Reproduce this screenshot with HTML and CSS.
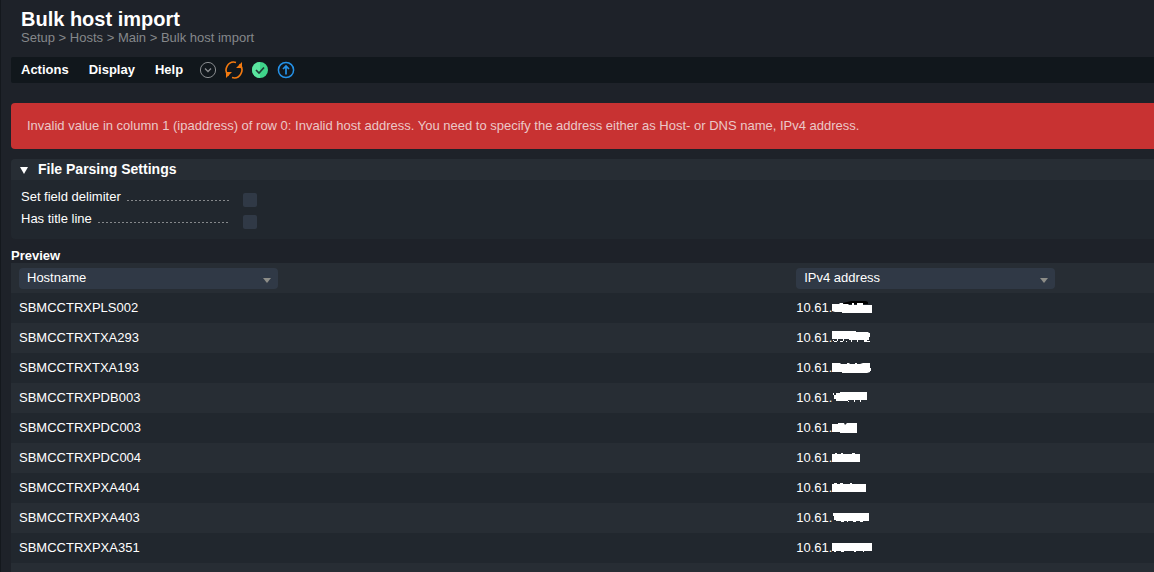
FILE: index.html
```html
<!DOCTYPE html>
<html lang="en">
<head>
    <meta charset="UTF-8">
    <meta name="viewport" content="width=device-width, initial-scale=1.0">
    <title>Bulk host import</title>
    <link rel="stylesheet" href="styles.css">
</head>
<body>
    <div class="page">
        <header class="page-header">
            <h1>Bulk host import</h1>
            <nav class="breadcrumb">
                <a href="#">Setup</a> &gt; <a href="#">Hosts</a> &gt; <a href="#">Main</a> &gt; <a href="#">Bulk host import</a>
            </nav>
        </header>

        <!-- Menu bar -->
        <div class="menu-bar">
            <div class="menus">
                <button class="menu" type="button">Actions</button>
                <button class="menu" type="button">Display</button>
                <button class="menu" type="button">Help</button>
            </div>
            <div class="shortcuts">
                <button class="icon-button" type="button" aria-label="More">
                    <svg viewBox="0 0 18 18" fill="none" stroke="#8a8d90">
                        <circle cx="9" cy="9" r="7.6"/>
                        <path d="M6 7.5l3 3 3-3" stroke-width="1.3"/>
                    </svg>
                </button>
                <button class="icon-button" type="button" aria-label="Reload">
                    <svg viewBox="0 0 18 18" fill="none" stroke="#f37a10" stroke-width="1.6">
                        <path d="M11 1.4A7.8 7.8 0 0 0 3.600 14.600M7 16.600A7.800 7.800 0 0 0 14.400 3.400"/>
                        <path d="M17 1v6h-6zM1 17v-6h6z" fill="#f37a10" stroke="none"/>
                    </svg>
                </button>
                <button class="icon-button" type="button" aria-label="Accept">
                    <svg viewBox="0 0 18 18">
                        <circle cx="9" cy="9" r="8" fill="#3fd48a"/>
                        <path d="M9 1a8 8 0 0 0 0 16z" fill="#5ae59f"/>
                        <path d="M5 9l3 3 5-5.500" fill="none" stroke="#1e3a34" stroke-width="1.7"/>
                    </svg>
                </button>
                <button class="icon-button" type="button" aria-label="Upload">
                    <svg viewBox="0 0 18 18" fill="none" stroke="#2592e8" stroke-width="1.5">
                        <circle cx="9" cy="9" r="7.6"/>
                        <path d="M9 13.500V5M6 8l3-3 3 3" stroke-width="1.7"/>
                    </svg>
                </button>
            </div>
        </div>

        <div class="error" role="alert">Invalid value in column 1 (ipaddress) of row 0: Invalid host address. You need to specify the address either as Host- or DNS name, IPv4 address.</div>

        <!-- Parsing settings -->
        <section class="settings">
            <h2 class="settings-title">
                <svg class="fold-icon" viewBox="0 0 8 7"><path d="M0 0h8L4 7z" fill="#fff"/></svg>
                File Parsing Settings
            </h2>
            <div class="settings-body">
                <div class="setting">
                    <label for="delimiter">Set field delimiter</label>
                    <input type="checkbox" id="delimiter">
                </div>
                <div class="setting">
                    <label for="title-line">Has title line</label>
                    <input type="checkbox" id="title-line">
                </div>
            </div>
        </section>

        <!-- Preview table -->
        <h3 class="preview-title">Preview</h3>
        <table class="preview">
            <thead>
                <tr>
                    <th class="host-column">
                        <select aria-label="Column 1"><option>Hostname</option></select>
                    </th>
                    <th>
                        <select aria-label="Column 2"><option>IPv4 address</option></select>
                    </th>
                </tr>
            </thead>
            <tbody>
                <tr>
                    <td>SBMCCTRXPLS002</td>
                    <td>10.61.<svg class="mask" viewBox="0 0 42 16"><path d="M11 3l8-2h15l2 1v2H12z" fill="#000"/><path d="M0 4h7l1-1h3v1h5l1 1h3V3h2v2h3V3h6v2h9v8H10v-1H3l-3-1z"/></svg></td>
                </tr>
                <tr>
                    <td>SBMCCTRXTXA293</td>
                    <td>10.61.<svg class="mask" viewBox="0 0 42 16"><path d="M0 1h24v1h12l1 1v7H17V9H0z"/><path d="M1 10h1v1H1zM2 11h3v1H2zM5 9h1v2H5zM8 11h3v1H8zM11 9h1v2h-1zM14 11h1v1h-1zM19 10h1v2h-1zM25 10h1v2h-1zM37 3h1v4h-1zM32 10h3v2h-3zM32 11h6v1h-6z"/></svg></td>
                </tr>
                <tr>
                    <td>SBMCCTRXTXA193</td>
                    <td>10.61.<svg class="mask" viewBox="0 0 42 16"><path d="M0 3h8l1 1h6V3h2l1 1h5V3h2v1h3l3-1h7v9l-3 1H10v-1H0z"/><path d="M38 8h1v3h-1z"/></svg></td>
                </tr>
                <tr>
                    <td>SBMCCTRXPDB003</td>
                    <td>10.61.<svg class="mask" viewBox="0 0 42 16"><path d="M8 2h27v8H16v1H4V9H2V5h2V3h4z"/><path d="M1 3h1v2H1zM16 11h1v1h-1zM22 10h1v2h-1zM28 10h1v2h-1z"/></svg></td>
                </tr>
                <tr>
                    <td>SBMCCTRXPDC003</td>
                    <td>10.61.<svg class="mask" viewBox="0 0 42 16"><path d="M0 4h6V3h6l1 2 2-2h10v10H8v-1H0z"/></svg></td>
                </tr>
                <tr>
                    <td>SBMCCTRXPDC004</td>
                    <td>10.61.<svg class="mask" viewBox="0 0 42 16"><path d="M0 4h3V3h2v1h4V3h2v1h9V3h3v1h5v8H0z"/></svg></td>
                </tr>
                <tr>
                    <td>SBMCCTRXPXA404</td>
                    <td>10.61.<svg class="mask" viewBox="0 0 42 16"><path d="M0 4h2V3h3v1h3V3h3v1h7V3h2v1h14v8H0z"/></svg></td>
                </tr>
                <tr>
                    <td>SBMCCTRXPXA403</td>
                    <td>10.61.<svg class="mask" viewBox="0 0 42 16"><path d="M2 3h35v8H4v-1H2z"/><path d="M1 3h1v3H1zM9 11h3v1H9zM15 11h1v1h-1zM21 11h3v1h-3zM28 11h3v1h-3z"/></svg></td>
                </tr>
                <tr>
                    <td>SBMCCTRXPXA351</td>
                    <td>10.61.<svg class="mask" viewBox="0 0 42 16"><path d="M0 3h40v8H0z"/><path d="M2 11h2v1H2zM9 11h3v1H9zM22 11h2v1h-2zM31 11h1v1h-1z"/></svg></td>
                </tr>
                <tr>
                    <td></td>
                    <td></td>
                </tr>
            </tbody>
        </table>
    </div>
</body>
</html>
```
FILE: styles.css
```css
:root {
    --background-color: #1e2229;
    --bar-color: #11171c;
    --panel-color: #21272e;
    --row-color: #272d34;
    --input-color: #303946;
    --error-color: #c83232;
    --muted-color: #85888b;
    --text-color: #fff;
}

* {
    box-sizing: border-box;
}

body {
    margin: 0;
    background: var(--background-color);
    color: var(--text-color);
    font-family: "Liberation Sans", Arial, sans-serif;
    font-size: 13px;
    line-height: 16px;
}

.page {
    height: 100vh;
    overflow: hidden;
    padding: 9px 0 0 10px;
    border-left: 1px solid #14181d;
}

/* Header */
.page-header {
    padding-left: 10px;
}

h1 {
    margin: 0;
    font-size: 20px;
    line-height: 21px;
}

.breadcrumb,
.breadcrumb a {
    color: var(--muted-color);
    text-decoration: none;
}

/* Menu bar */
.menu-bar {
    display: flex;
    align-items: center;
    gap: 16px;
    height: 26px;
    margin-top: 11px;
    padding-left: 10px;
    background: var(--bar-color);
    border-radius: 2px 0 0 2px;
}

.menus {
    display: flex;
    gap: 20px;
}

.menu,
.icon-button {
    padding: 0;
    border: 0;
    background: none;
    color: inherit;
    cursor: pointer;
}

.menu {
    font: inherit;
    font-weight: bold;
}

.shortcuts {
    display: flex;
    gap: 8px;
}

.icon-button svg {
    display: block;
    width: 18px;
    height: 18px;
}

/* Error message */
.error {
    margin: 20px 0 10px;
    padding: 15px 16px;
    background: var(--error-color);
    border-radius: 4px 0 0 4px;
    color: #ebc8c8;
}

/* Settings */
.settings {
    background: var(--panel-color);
    border-radius: 4px 0 0 4px;
}

.settings-title {
    display: flex;
    align-items: center;
    gap: 10px;
    margin: 0;
    padding: 2px 9px 3px;
    background: var(--row-color);
    border-radius: 4px 0 0 0;
    font-size: 14px;
}

.fold-icon {
    width: 8px;
    height: 7px;
    margin-top: 2px;
}

.settings-body {
    padding: 9px 10px 6px;
}

.setting {
    display: flex;
    gap: 14px;
    height: 22px;
}

.setting label {
    display: flex;
    gap: 6px;
    width: 208px;
    height: 16px;
}

/* Dotted line between the label and its checkbox */
.setting label::after {
    content: "";
    flex: 1;
    height: 12px;
    background: repeating-linear-gradient(to right, #85888b 0 2px, transparent 2px 4px) no-repeat bottom / 100% 1px;
}

.setting input {
    appearance: none;
    width: 14px;
    height: 14px;
    margin: 4px 0 0;
    background: var(--input-color);
    border-radius: 2px;
}

/* Preview */
.preview-title {
    margin: 9px 0 0;
    font-size: 13px;
    line-height: 15px;
}

.preview {
    width: 100%;
    border-collapse: collapse;
    table-layout: fixed;
}

.host-column {
    width: 68%;
}

.preview tr {
    height: 30px;
    background: var(--panel-color);
}

.preview thead tr,
.preview tbody tr:nth-child(even) {
    background: var(--row-color);
}

.preview th,
.preview td {
    padding: 0 8px;
    text-align: left;
}

.preview select {
    display: block;
    appearance: none;
    width: 259px;
    height: 21px;
    padding: 0 8px;
    border: 0;
    border-radius: 4px;
    background: var(--input-color) url("data:image/svg+xml,%3Csvg xmlns='http://www.w3.org/2000/svg' width='8' height='5'%3E%3Cpath d='M0 0h8L4 5z' fill='%238d8d88'/%3E%3C/svg%3E") no-repeat right 7px top 10px;
    color: inherit;
    font: inherit;
    font-weight: normal;
}

.mask {
    width: 42px;
    height: 16px;
    vertical-align: middle;
    fill: #fff;
}
```
